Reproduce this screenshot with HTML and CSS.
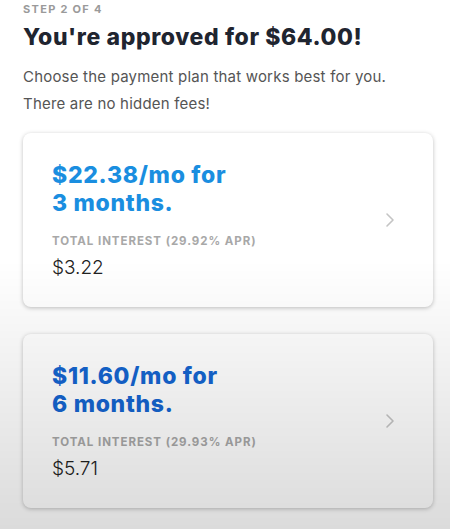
FILE: index.html
```html
<!DOCTYPE html>
<html>

<head>
    <title>Choose a plan</title>
    <link rel="stylesheet" href="styles.css">
</head>

<body>
    <div class="page">
        <div class="step">STEP 2 OF 4</div>
        <h1>You're approved for $64.00!</h1>
        <p class="intro">Choose the payment plan that works best for you. There are no hidden fees!</p>

        <div class="plan">
            <div class="plan-info">
                <div class="plan-title">$22.38/mo for<br>3 months.</div>
                <div class="plan-label">TOTAL INTEREST (29.92% APR)</div>
                <div class="plan-amount">$3.22</div>
            </div>
            <svg class="chevron" width="10" height="16" viewBox="0 0 10 16">
                <path d="M2 2 L8 8 L2 14" fill="none" stroke="#c4c4c4" stroke-width="1.6" stroke-linecap="round" stroke-linejoin="round"/>
            </svg>
        </div>

        <div class="plan plan-dark">
            <div class="plan-info">
                <div class="plan-title">$11.60/mo for<br>6 months.</div>
                <div class="plan-label">TOTAL INTEREST (29.93% APR)</div>
                <div class="plan-amount">$5.71</div>
            </div>
            <svg class="chevron" width="10" height="16" viewBox="0 0 10 16">
                <path d="M2 2 L8 8 L2 14" fill="none" stroke="#c4c4c4" stroke-width="1.6" stroke-linecap="round" stroke-linejoin="round"/>
            </svg>
        </div>
    </div>
    <div class="fade"></div>
</body>

</html>
```

FILE: styles.css
```css
body {
    margin: 0;
    font-family: Inter, "Open Sans", Arial, sans-serif;
    background-color: #fff;
    overflow: hidden;
}

.page {
    padding: 0 17px 0 23px;
}

.step {
    font-size: 11px;
    font-weight: 700;
    color: #9a9a9a;
    letter-spacing: 1.3px;
    line-height: 14px;
    margin-top: 2px;
}

h1 {
    font-size: 23px;
    font-weight: 800;
    color: #1f2530;
    letter-spacing: 0.6px;
    margin: 7px 0 0;
    line-height: 28px;
}

.intro {
    font-size: 15px;
    color: #555;
    letter-spacing: 0.2px;
    line-height: 27px;
    margin: 12px 20px 16px 0;
}

.plan {
    display: flex;
    align-items: center;
    justify-content: space-between;
    background-color: #fff;
    border-radius: 8px;
    box-shadow: 0 1px 4px rgba(0, 0, 0, 0.25);
    padding: 24px 38px 25px 29px;
    margin-bottom: 27px;
    height: 125px;
}

.plan-title {
    font-size: 23px;
    font-weight: 800;
    color: #1a8ee0;
    letter-spacing: 0.7px;
    line-height: 28px;
}

.plan-dark .plan-title {
    color: #1565d0;
}

.plan-label {
    font-size: 11.5px;
    font-weight: 700;
    color: #a8a8a8;
    margin-top: 17px;
    letter-spacing: 0.95px;
}

.plan-amount {
    font-size: 19px;
    font-weight: 300;
    color: #222;
    margin-top: 8px;
}

.fade {
    position: fixed;
    left: 0;
    right: 0;
    top: 260px;
    bottom: 0;
    background: linear-gradient(to bottom, rgba(0, 0, 0, 0), rgba(0, 0, 0, 0.14));
    pointer-events: none;
}
```
